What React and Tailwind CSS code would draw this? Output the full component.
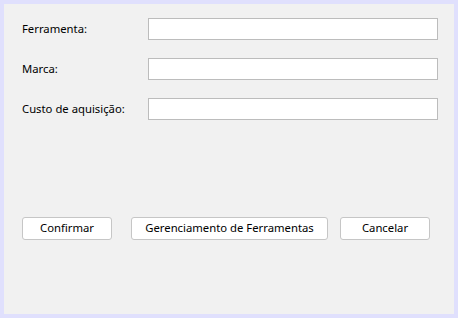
import React from "react";

const fields = ["Ferramenta:", "Marca:", "Custo de aquisição:"];

export default function App() {
  return (
    <div className="w-[467px] h-[322px] bg-white font-['Noto_Sans',sans-serif] text-[11.3px] text-black">
      <div className="w-[458px] h-[318px] border-4 border-[#e0e0fd] bg-[#f1f1f1] pt-[14px] pl-[18px] pr-[16px]">
        <div className="flex flex-col gap-[18px]">
          {fields.map((label) => (
            <div key={label} className="flex items-center justify-between h-[22px]">
              <span className="leading-none">{label}</span>
              <input className="w-[290px] h-[22px] bg-white border border-[#bcbcbc] outline-none" />
            </div>
          ))}
        </div>
        <div className="flex mt-[97px]">
          <button className="w-[90px] h-[23px] bg-white border border-[#c6c6c6] rounded-[3px]">
            Confirmar
          </button>
          <button className="ml-[19px] w-[197px] h-[23px] bg-white border border-[#c6c6c6] rounded-[3px]">
            Gerenciamento de Ferramentas
          </button>
          <button className="ml-[12px] w-[90px] h-[23px] bg-white border border-[#c6c6c6] rounded-[3px]">
            Cancelar
          </button>
        </div>
      </div>
    </div>
  );
}
